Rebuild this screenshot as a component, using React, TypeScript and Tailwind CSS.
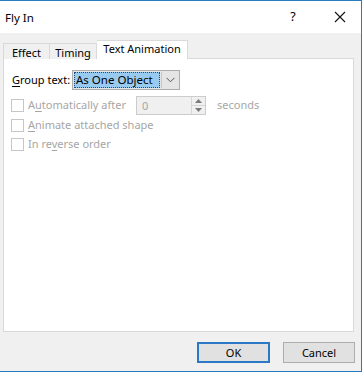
import React from "react";

function Check({ ukey, before, after, width }: { ukey: string; before: string; after: string; width?: string }) {
  return (
    <div className={"flex items-center h-[19px] " + (width ?? "")}>
      <span className="w-[13px] h-[13px] border border-[#c6c6c6] bg-white shrink-0" />
      <span className="ml-[4px] text-[#a6a6a6] whitespace-nowrap">
        {before}
        <span className="underline underline-offset-2">{ukey}</span>
        {after}
      </span>
    </div>
  );
}

export default function App() {
  return (
    <div
      className="w-[364px] h-[377px] bg-white text-[11px] text-black"
      style={{ fontFamily: '"Noto Sans", "Open Sans", sans-serif' }}
    >
      <div className="w-[362px] h-[372px] border-t border-r border-b border-[#2b7bc0] flex flex-col">
        {/* title bar */}
        <div className="h-[32px] bg-white flex items-center pl-[5px] shrink-0">
          <span className="flex-1 text-[11.5px] mt-[2px]">Fly In</span>
          <span className="w-[12px] text-center text-[12.5px] mr-[35px]">?</span>
          <svg width="12" height="12" viewBox="0 0 12 12" className="mr-[15px]">
            <path d="M1 1 L11 11 M11 1 L1 11" stroke="#111" strokeWidth="1.1" />
          </svg>
        </div>

        {/* body */}
        <div className="flex-1 bg-[#f0f0f0] flex flex-col pl-[3px] pr-[7px] pt-[7px]">
          {/* tabs */}
          <div className="flex items-end h-[19px] -mb-px relative z-10">
            <div className="w-[47px] h-[16px] border border-b-0 border-[#d9d9d9] bg-[#f0f0f0] flex items-center justify-center leading-none pt-[1px]">
              Effect
            </div>
            <div className="w-[47px] h-[16px] border border-l-0 border-b-0 border-[#d9d9d9] bg-[#f0f0f0] flex items-center justify-center leading-none pt-[1px]">
              Timing
            </div>
            <div className="w-[91px] h-[19px] border border-l-0 border-b-0 border-[#d9d9d9] bg-white flex items-start justify-center pt-[2px] leading-none">
              Text Animation
            </div>
          </div>

          {/* panel */}
          <div className="h-[274px] bg-white border border-[#d9d9d9] pl-[7px] pt-[11px]">
            <div className="flex items-center h-[20px]">
              <span className="ml-[1px] w-[60px] whitespace-nowrap">
                <span className="underline underline-offset-2">G</span>roup text:
              </span>
              <div className="flex h-[20px] border border-[#acacac] bg-[#e5e5e5] p-px">
                <div className="w-[86px] h-full bg-[#99cbf0] border border-dotted border-[#2a4a6b] flex items-center pl-[1px] leading-none text-[11.5px]">
                  As One Object
                </div>
                <div className="w-[17px] h-full flex items-center justify-center ml-px border-l border-[#c8c8c8]">
                  <svg width="9" height="6" viewBox="0 0 9 6">
                    <path d="M0.5 0.8 L4.5 4.8 L8.5 0.8" fill="none" stroke="#555" strokeWidth="1" />
                  </svg>
                </div>
              </div>
            </div>

            <div className="flex items-center mt-[5px] h-[20px]">
              <Check ukey="u" before="A" after="tomatically after" width="w-[125px]" />
              <div className="w-[70px] h-[19px] border border-[#ccc] bg-[#f0f0f0] flex">
                <span className="flex-1 text-[#a6a6a6] pl-[5px] leading-[17px]">0</span>
                <div className="w-[14px] flex flex-col border-l border-[#d6d6d6]">
                  <div className="flex-1 flex items-center justify-center border-b border-[#d6d6d6]">
                    <svg width="7" height="4" viewBox="0 0 7 4">
                      <path d="M0 4 L3.5 0 L7 4 Z" fill="#7a7a7a" />
                    </svg>
                  </div>
                  <div className="flex-1 flex items-center justify-center">
                    <svg width="7" height="4" viewBox="0 0 7 4">
                      <path d="M0 0 L3.5 4 L7 0 Z" fill="#7a7a7a" />
                    </svg>
                  </div>
                </div>
              </div>
              <span className="ml-[11px] text-[#a6a6a6]">seconds</span>
            </div>

            <div className="mt-[1px]">
              <Check ukey="A" before="" after="nimate attached shape" />
            </div>
            <div>
              <Check ukey="v" before="In re" after="erse order" />
            </div>
          </div>

          {/* buttons */}
          <div className="flex justify-end gap-[13px] mt-[10px] mr-[-1px]">
            <button className="w-[73px] h-[21px] border-2 border-[#2a78c6] bg-[#e1e1e1] leading-none">
              OK
            </button>
            <button className="w-[72px] h-[21px] border border-[#adadad] bg-[#e1e1e1] leading-none">
              Cancel
            </button>
          </div>
        </div>
      </div>
    </div>
  );
}
